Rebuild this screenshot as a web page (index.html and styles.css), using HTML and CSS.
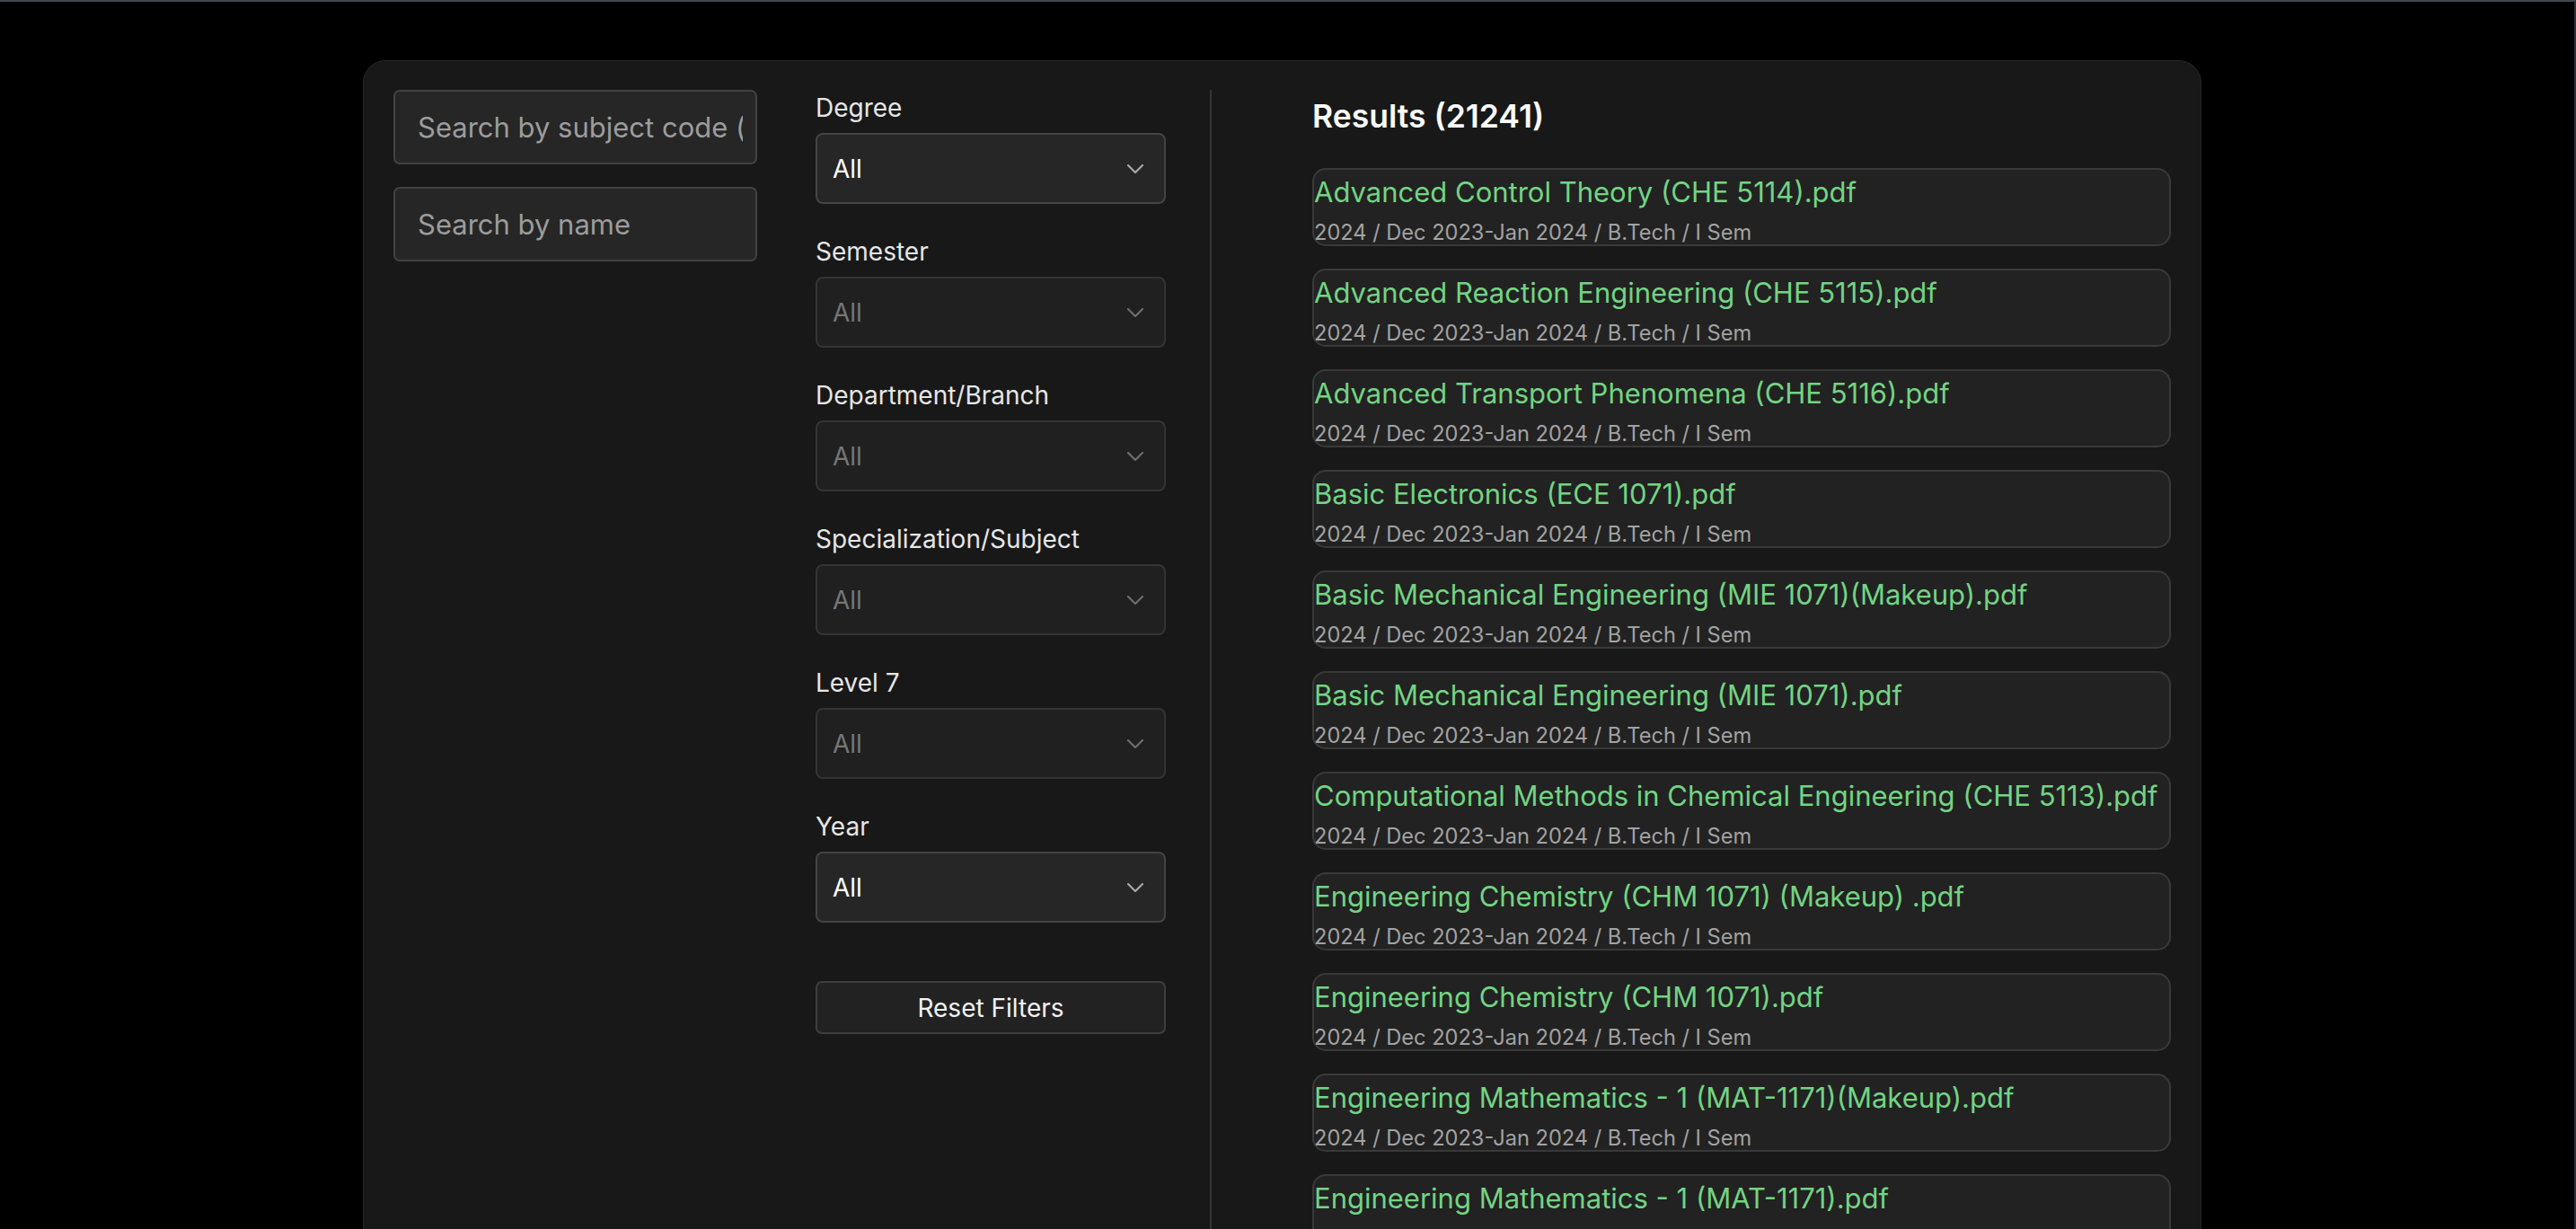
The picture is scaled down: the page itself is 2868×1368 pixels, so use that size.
FILE: index.html
```html
<!DOCTYPE html>
<html lang="en">
<head>
<meta charset="utf-8">
<title>Question Papers</title>
<link rel="stylesheet" href="styles.css">
</head>
<body>
<div class="frame">
  <main class="panel">
    <section class="search-col">
      <input class="search" type="text" placeholder="Search by subject code (e.g. CHE 5114)">
      <input class="search" type="text" placeholder="Search by name">
    </section>

    <section class="filter-col">
      <div class="group">
        <label class="label">Degree</label>
        <div class="select-wrap">
          <select class="select"><option>All</option></select>
          <svg class="chev" width="18" height="10" viewBox="0 0 18 10"><path d="M1 1 L9 9 L17 1" fill="none" stroke="#a8a8a8" stroke-width="2.2" stroke-linecap="round" stroke-linejoin="round"/></svg>
        </div>
      </div>
      <div class="group">
        <label class="label">Semester</label>
        <div class="select-wrap">
          <select class="select" disabled><option>All</option></select>
          <svg class="chev dim" width="18" height="10" viewBox="0 0 18 10"><path d="M1 1 L9 9 L17 1" fill="none" stroke="#6e6e6e" stroke-width="2.2" stroke-linecap="round" stroke-linejoin="round"/></svg>
        </div>
      </div>
      <div class="group">
        <label class="label">Department/Branch</label>
        <div class="select-wrap">
          <select class="select" disabled><option>All</option></select>
          <svg class="chev dim" width="18" height="10" viewBox="0 0 18 10"><path d="M1 1 L9 9 L17 1" fill="none" stroke="#6e6e6e" stroke-width="2.2" stroke-linecap="round" stroke-linejoin="round"/></svg>
        </div>
      </div>
      <div class="group">
        <label class="label">Specialization/Subject</label>
        <div class="select-wrap">
          <select class="select" disabled><option>All</option></select>
          <svg class="chev dim" width="18" height="10" viewBox="0 0 18 10"><path d="M1 1 L9 9 L17 1" fill="none" stroke="#6e6e6e" stroke-width="2.2" stroke-linecap="round" stroke-linejoin="round"/></svg>
        </div>
      </div>
      <div class="group">
        <label class="label">Level 7</label>
        <div class="select-wrap">
          <select class="select" disabled><option>All</option></select>
          <svg class="chev dim" width="18" height="10" viewBox="0 0 18 10"><path d="M1 1 L9 9 L17 1" fill="none" stroke="#6e6e6e" stroke-width="2.2" stroke-linecap="round" stroke-linejoin="round"/></svg>
        </div>
      </div>
      <div class="group">
        <label class="label">Year</label>
        <div class="select-wrap">
          <select class="select"><option>All</option></select>
          <svg class="chev" width="18" height="10" viewBox="0 0 18 10"><path d="M1 1 L9 9 L17 1" fill="none" stroke="#a8a8a8" stroke-width="2.2" stroke-linecap="round" stroke-linejoin="round"/></svg>
        </div>
      </div>
      <button class="reset" type="button">Reset Filters</button>
    </section>

    <div class="divider"></div>

    <section class="results-col">
      <h2 class="results-title">Results (21241)</h2>
      <ul class="results">
        <li class="card"><a class="card-title">Advanced Control Theory (CHE 5114).pdf</a><div class="card-meta">2024 / Dec 2023-Jan 2024 / B.Tech / I Sem</div></li>
        <li class="card"><a class="card-title">Advanced Reaction Engineering (CHE 5115).pdf</a><div class="card-meta">2024 / Dec 2023-Jan 2024 / B.Tech / I Sem</div></li>
        <li class="card"><a class="card-title">Advanced Transport Phenomena (CHE 5116).pdf</a><div class="card-meta">2024 / Dec 2023-Jan 2024 / B.Tech / I Sem</div></li>
        <li class="card"><a class="card-title">Basic Electronics (ECE 1071).pdf</a><div class="card-meta">2024 / Dec 2023-Jan 2024 / B.Tech / I Sem</div></li>
        <li class="card"><a class="card-title">Basic Mechanical Engineering (MIE 1071)(Makeup).pdf</a><div class="card-meta">2024 / Dec 2023-Jan 2024 / B.Tech / I Sem</div></li>
        <li class="card"><a class="card-title">Basic Mechanical Engineering (MIE 1071).pdf</a><div class="card-meta">2024 / Dec 2023-Jan 2024 / B.Tech / I Sem</div></li>
        <li class="card"><a class="card-title">Computational Methods in Chemical Engineering (CHE 5113).pdf</a><div class="card-meta">2024 / Dec 2023-Jan 2024 / B.Tech / I Sem</div></li>
        <li class="card"><a class="card-title">Engineering Chemistry (CHM 1071) (Makeup) .pdf</a><div class="card-meta">2024 / Dec 2023-Jan 2024 / B.Tech / I Sem</div></li>
        <li class="card"><a class="card-title">Engineering Chemistry (CHM 1071).pdf</a><div class="card-meta">2024 / Dec 2023-Jan 2024 / B.Tech / I Sem</div></li>
        <li class="card"><a class="card-title">Engineering Mathematics - 1 (MAT-1171)(Makeup).pdf</a><div class="card-meta">2024 / Dec 2023-Jan 2024 / B.Tech / I Sem</div></li>
        <li class="card"><a class="card-title">Engineering Mathematics - 1 (MAT-1171).pdf</a><div class="card-meta">2024 / Dec 2023-Jan 2024 / B.Tech / I Sem</div></li>
      </ul>
    </section>
  </main>
</div>
</body>
</html>
```

FILE: styles.css
```css
html, body {
  margin: 0;
  padding: 0;
  background: #000;
  overflow: hidden;
  height: 100%;
}

body {
  font-family: Inter, "Noto Sans", "Liberation Sans", sans-serif;
  color: #e8e8e8;
}

.frame {
  height: 100%;
  box-sizing: border-box;
  border-top: 2px solid #41474c;
  border-right: 2px solid #2e3236;
  padding: 65px 0 0 404px;
}

.panel {
  box-sizing: border-box;
  width: 2047px;
  min-height: 1500px;
  background: #181818;
  border: 1px solid #262626;
  border-radius: 25px;
  padding: 32px 33px 0 33px;
  display: grid;
  grid-template-columns: 405px 390px 2px 956px;
  column-gap: 65px;
  align-items: start;
}

.search-col {
  display: flex;
  flex-direction: column;
  gap: 25px;
}

.search {
  box-sizing: border-box;
  width: 405px;
  height: 83px;
  background: #262626;
  border: 2px solid #424242;
  border-radius: 7px;
  padding: 0 14px 0 25px;
  font-family: inherit;
  font-size: 31px;
  color: #e8e8e8;
  outline: none;
}

.search::placeholder {
  color: #9c9c9c;
}

.filter-col {
  display: flex;
  flex-direction: column;
  padding-top: 3px;
}

.group {
  display: flex;
  flex-direction: column;
  margin-bottom: 36px;
}

.label {
  font-size: 28px;
  line-height: 34px;
  color: #e6e6e6;
  margin-bottom: 11px;
}

.select-wrap {
  position: relative;
}

.select {
  -webkit-appearance: none;
  appearance: none;
  box-sizing: border-box;
  width: 390px;
  height: 79px;
  background: #262626;
  border: 2px solid #444;
  border-radius: 8px;
  padding: 0 0 0 17px;
  font-family: inherit;
  font-size: 28px;
  color: #fff;
  outline: none;
  opacity: 1;
}

.select:disabled {
  background: #202020;
  border-color: #343434;
  color: #767676;
}

.chev {
  position: absolute;
  right: 25px;
  top: 35px;
}

.reset {
  box-sizing: border-box;
  width: 390px;
  height: 59px;
  margin-top: 29px;
  background: #222;
  border: 2px solid #3e3e3e;
  border-radius: 7px;
  font-family: inherit;
  font-size: 28px;
  color: #f2f2f2;
}

.divider {
  align-self: stretch;
  margin-left: -16px;
  width: 2px;
  background: #363636;
}

.results-col {
  margin-left: 31px;
  width: 956px;
}

.results-title {
  margin: 8px 0 36px 0;
  font-size: 35.5px;
  line-height: 43px;
  font-weight: 600;
  color: #fafafa;
}

.results {
  list-style: none;
  margin: 0;
  padding: 0;
  display: flex;
  flex-direction: column;
  gap: 25px;
}

.card {
  box-sizing: border-box;
  width: 956px;
  height: 87px;
  background: #222;
  border: 2px solid #393939;
  border-radius: 15px;
  padding-top: 6px;
}

.card-title {
  display: block;
  font-size: 31px;
  line-height: 38px;
  color: #72d483;
  white-space: nowrap;
}

.card-meta {
  margin-top: 11px;
  font-size: 23.6px;
  line-height: 29px;
  color: #a2a2a2;
}
```
